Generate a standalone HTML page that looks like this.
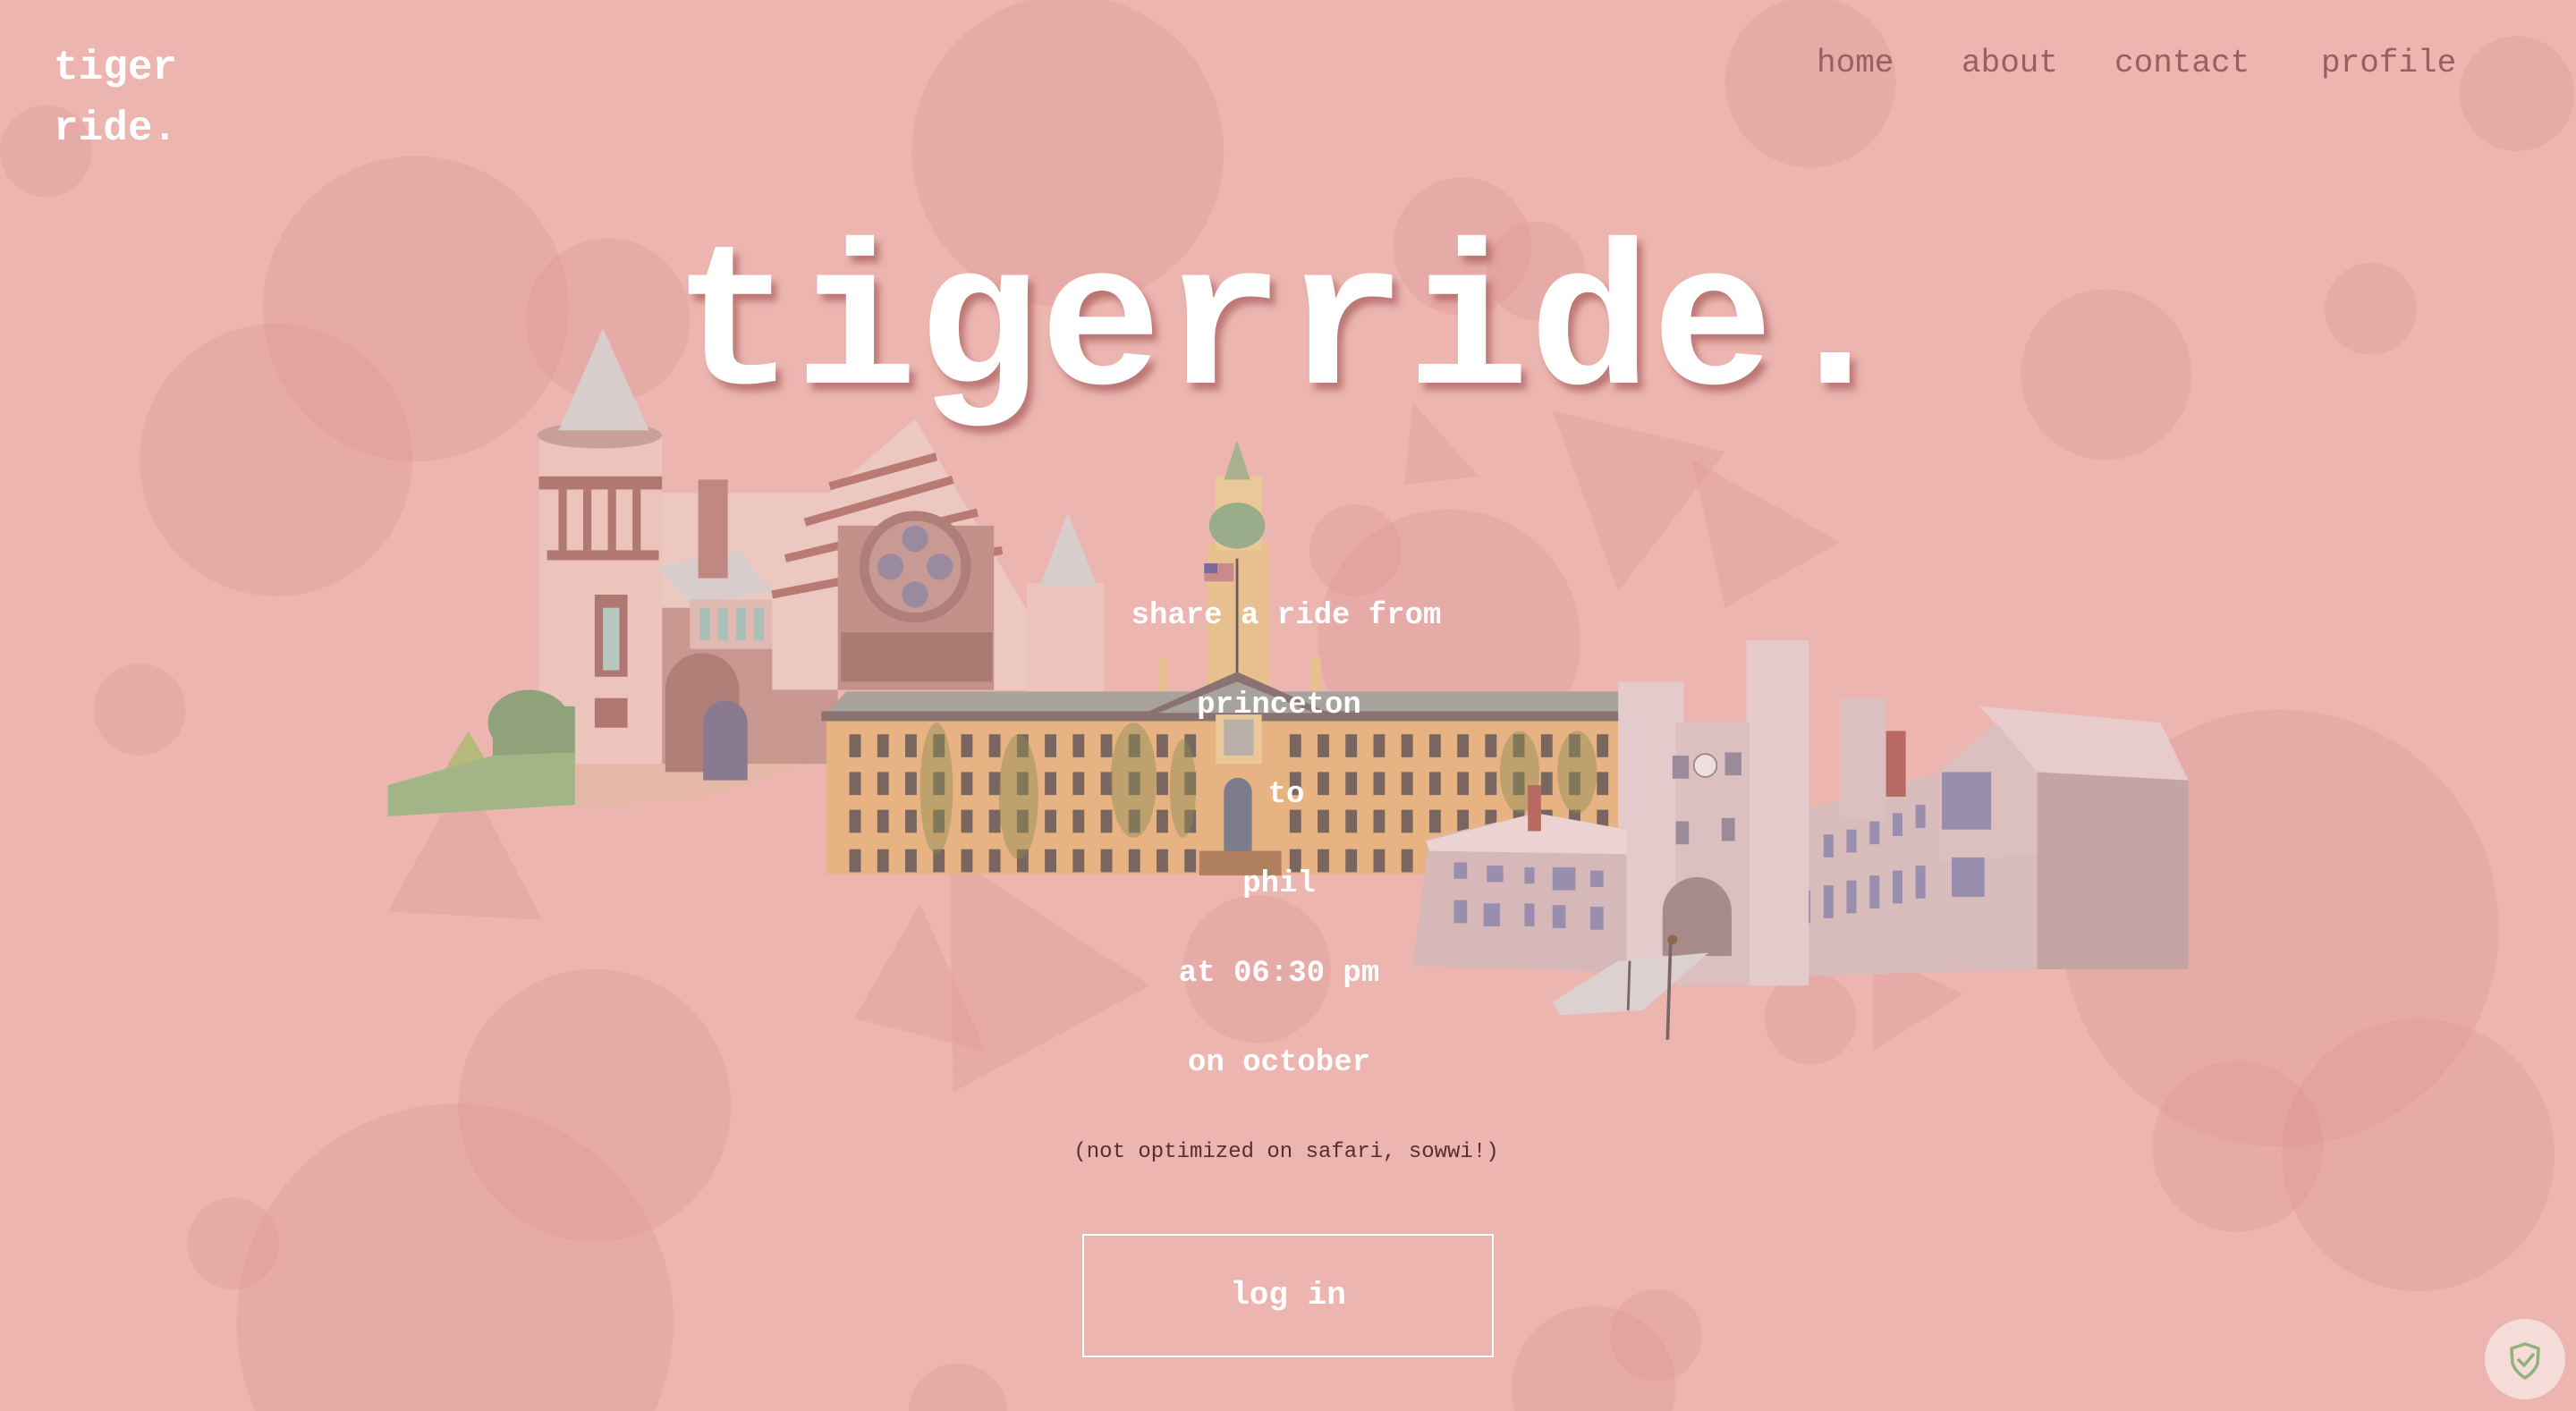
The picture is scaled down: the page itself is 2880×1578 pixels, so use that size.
<!DOCTYPE html>
<html><head><meta charset="utf-8"><style>
html,body{margin:0;padding:0;width:2880px;height:1578px;overflow:hidden;background:#ecb5b0;font-family:"Liberation Mono","DejaVu Sans Mono",monospace;}
#wrap{position:relative;width:2880px;height:1578px;overflow:hidden;}
svg.bg{position:absolute;left:0;top:0;width:2880px;height:1578px;}
.logo{position:absolute;left:60px;top:42px;color:#fff;font-weight:bold;font-size:46px;line-height:68px;}
.nav{position:absolute;top:50px;font-size:36px;color:#9a5e5c;}
.title{position:absolute;left:0;width:2880px;top:218px;text-align:center;color:#fff;font-weight:bold;font-size:228px;line-height:300px;text-shadow:6px 8px 8px rgba(150,70,70,0.55);margin-left:-4px;}
.line{position:absolute;left:0;width:2860px;text-align:center;color:#fff;font-weight:bold;font-size:34px;}
.note{position:absolute;left:0;width:2876px;text-align:center;color:#5a2e2e;font-size:24px;top:1275px;}
.btn{position:absolute;left:1210px;top:1380px;width:456px;height:134px;border:2px solid #fff;color:#fff;font-weight:bold;font-size:36px;line-height:134px;text-align:center;}
.shield{position:absolute;left:2778px;top:1475px;width:90px;height:90px;border-radius:50%;background:#f5dcd9;}
</style></head><body><div id="wrap">
<svg class="bg" viewBox="0 0 1568 859" preserveAspectRatio="none">
<g fill="rgba(215,135,135,0.22)">
<circle cx="650" cy="92" r="95"/><circle cx="1102" cy="50" r="52"/><circle cx="1532" cy="57" r="35"/><circle cx="28" cy="92" r="28"/>
<circle cx="253" cy="188" r="93"/><circle cx="370" cy="195" r="50"/><circle cx="168" cy="280" r="83"/><circle cx="890" cy="150" r="42"/>
<circle cx="935" cy="165" r="30"/><circle cx="1282" cy="228" r="52"/><circle cx="1443" cy="188" r="28"/><circle cx="85" cy="432" r="28"/>
<circle cx="882" cy="390" r="80"/><circle cx="825" cy="335" r="28"/><circle cx="1388" cy="565" r="133"/><circle cx="362" cy="673" r="83"/>
<circle cx="1362" cy="698" r="52"/><circle cx="1472" cy="703" r="83"/><circle cx="277" cy="805" r="133"/><circle cx="142" cy="757" r="28"/>
<circle cx="765" cy="590" r="45"/><circle cx="1102" cy="620" r="28"/><circle cx="1008" cy="813" r="28"/><circle cx="970" cy="845" r="50"/><circle cx="583" cy="860" r="30"/>
<polygon points="236,555 283,470 330,560"/><polygon points="945,250 1050,275 985,360"/><polygon points="1030,280 1120,330 1050,370"/>
<polygon points="520,620 560,550 600,640"/><polygon points="578,520 700,600 580,665"/><polygon points="1140,580 1195,605 1140,640"/>
<polygon points="860,245 900,290 855,295"/>
</g>
<polygon points="350,455 500,462 430,485 350,492" fill="#e6b8a8"/>
<rect x="330" y="300" width="180" height="165" fill="#ecc8c0"/>
<rect x="400" y="370" width="110" height="95" fill="#c89890"/>
<path d="M405,470 V420 A22,22 0 0 1 450,420 V470Z" fill="#b08078"/>
<path d="M428,475 V440 A13,13 0 0 1 455,440 V475Z" fill="#8a7a90"/>
<rect x="328" y="265" width="75" height="200" fill="#ecc4bc"/>
<rect x="328" y="290" width="75" height="8" fill="#b07870"/>
<rect x="333" y="335" width="68" height="6" fill="#b07870"/>
<g fill="#b07870"><rect x="340" y="298" width="5" height="37"/><rect x="355" y="298" width="5" height="37"/><rect x="370" y="298" width="5" height="37"/><rect x="385" y="298" width="5" height="37"/></g>
<ellipse cx="365" cy="265" rx="38" ry="8" fill="#c8a098"/>
<polygon points="340,262 367,200 395,262" fill="#d8cccc"/>
<rect x="362" y="362" width="20" height="50" fill="#b07870"/><rect x="367" y="370" width="10" height="38" fill="#b8c8c0"/>
<rect x="362" y="425" width="20" height="18" fill="#b07870"/>
<polygon points="400,345 450,335 470,360 420,368" fill="#d8cccc"/>
<rect x="420" y="365" width="50" height="30" fill="#e0bab2"/><g fill="#a8c0b8"><rect x="426" y="370" width="6" height="20"/><rect x="437" y="370" width="6" height="20"/><rect x="448" y="370" width="6" height="20"/><rect x="459" y="370" width="6" height="20"/></g>
<rect x="425" y="292" width="18" height="60" fill="#c08880"/>
<polygon points="470,420 470,330 557,255 630,380 630,420" fill="#ecc8c0"/>
<g stroke="#b87a72" stroke-width="5"><line x1="490" y1="318" x2="580" y2="292"/><line x1="478" y1="340" x2="595" y2="312"/><line x1="470" y1="362" x2="610" y2="335"/><line x1="505" y1="296" x2="570" y2="278"/></g>
<rect x="510" y="320" width="95" height="100" fill="#c4908a"/>
<circle cx="557" cy="345" r="34" fill="#b07e78"/><circle cx="557" cy="345" r="28" fill="#c89a94"/>
<g fill="#9a8aa0"><circle cx="557" cy="328" r="8"/><circle cx="572" cy="345" r="8"/><circle cx="557" cy="362" r="8"/><circle cx="542" cy="345" r="8"/></g>
<rect x="512" y="385" width="92" height="30" fill="#a87a72"/>
<rect x="625" y="355" width="47" height="70" fill="#ecc4bc"/><polygon points="633,357 650,312 668,357" fill="#d8cccc"/>
<rect x="300" y="430" width="50" height="35" fill="#8fa27c"/><ellipse cx="322" cy="440" rx="25" ry="20" fill="#8fa27c"/>
<polygon points="270,470 285,445 300,470" fill="#b8b87a"/>
<polygon points="236,478 300,460 350,458 350,490 236,497" fill="#a3b487"/>
<rect x="735" y="330" width="38" height="95" fill="#e8c090"/><rect x="740" y="290" width="28" height="45" fill="#eac898"/>
<ellipse cx="753" cy="320" rx="17" ry="14" fill="#9aad8a"/><polygon points="745,292 753,268 761,292" fill="#a8b090"/>
<rect x="705" y="400" width="6" height="25" fill="#e8c090"/><rect x="798" y="400" width="6" height="25" fill="#e8c090"/>
<line x1="753" y1="340" x2="753" y2="410" stroke="#6a5a5a" stroke-width="1.5"/><rect x="733" y="343" width="18" height="11" fill="#c88a8a"/><rect x="733" y="343" width="8" height="6" fill="#7a6a9a"/>
<rect x="503" y="437" width="490" height="95" fill="#e8b383"/>
<polygon points="500,438 515,421 985,421 993,438" fill="#a8a29c"/>
<rect x="500" y="433" width="493" height="6" fill="#8a7272"/>
<polygon points="688,438 753,409 818,438" fill="#8a7272"/><polygon points="705,434 753,415 800,434" fill="#a8a29c"/>
<g fill="#7a6660" id="rows">
<rect x="517" y="447" width="7" height="14"/><rect x="534" y="447" width="7" height="14"/><rect x="551" y="447" width="7" height="14"/><rect x="568" y="447" width="7" height="14"/><rect x="585" y="447" width="7" height="14"/><rect x="602" y="447" width="7" height="14"/><rect x="619" y="447" width="7" height="14"/><rect x="636" y="447" width="7" height="14"/><rect x="653" y="447" width="7" height="14"/><rect x="670" y="447" width="7" height="14"/><rect x="687" y="447" width="7" height="14"/><rect x="704" y="447" width="7" height="14"/><rect x="721" y="447" width="7" height="14"/>
<rect x="785" y="447" width="7" height="14"/><rect x="802" y="447" width="7" height="14"/><rect x="819" y="447" width="7" height="14"/><rect x="836" y="447" width="7" height="14"/><rect x="853" y="447" width="7" height="14"/><rect x="870" y="447" width="7" height="14"/><rect x="887" y="447" width="7" height="14"/><rect x="904" y="447" width="7" height="14"/><rect x="921" y="447" width="7" height="14"/><rect x="938" y="447" width="7" height="14"/><rect x="955" y="447" width="7" height="14"/><rect x="972" y="447" width="7" height="14"/>
</g>
<use href="#rows" y="23"/><use href="#rows" y="46"/><use href="#rows" y="70"/>
<rect x="740" y="435" width="28" height="30" fill="#eac898"/><rect x="745" y="438" width="18" height="22" fill="#b8b0a8"/>
<path d="M745,520 V482 A8.5,8.5 0 0 1 762,482 V520Z" fill="#7c7c8c"/>
<rect x="730" y="518" width="50" height="15" fill="#b08060"/>
<g fill="rgba(140,140,80,0.45)"><ellipse cx="570" cy="480" rx="10" ry="40"/><ellipse cx="620" cy="485" rx="12" ry="38"/><ellipse cx="690" cy="475" rx="14" ry="35"/><ellipse cx="720" cy="480" rx="8" ry="30"/><ellipse cx="925" cy="470" rx="12" ry="25"/><ellipse cx="960" cy="470" rx="12" ry="25"/></g>
<polygon points="1070,500 1240,455 1240,590 1070,595" fill="#d8bcbc"/>
<polygon points="1240,470 1332,475 1332,590 1240,590" fill="#c4a4a4"/>
<polygon points="1205,430 1315,440 1332,475 1240,470" fill="#e8cccc"/>
<polygon points="1180,470 1215,440 1240,470 1240,520 1180,525" fill="#dcc0c0"/>
<rect x="1182" y="470" width="30" height="35" fill="#9a8eae"/>
<g fill="#9a8eae"><rect x="1082" y="545" width="6" height="20"/><rect x="1096" y="542" width="6" height="20"/><rect x="1110" y="539" width="6" height="20"/><rect x="1124" y="536" width="6" height="20"/><rect x="1138" y="533" width="6" height="20"/><rect x="1152" y="530" width="6" height="20"/><rect x="1166" y="527" width="6" height="20"/><rect x="1188" y="522" width="20" height="24"/>
<rect x="1110" y="508" width="6" height="14"/><rect x="1124" y="505" width="6" height="14"/><rect x="1138" y="500" width="6" height="14"/><rect x="1152" y="495" width="6" height="14"/><rect x="1166" y="490" width="6" height="14"/></g>
<rect x="1138" y="445" width="22" height="40" fill="#b86a62"/>
<rect x="1120" y="425" width="28" height="75" fill="#dcc0c0"/>
<rect x="985" y="415" width="40" height="180" fill="#e4caca"/><rect x="1063" y="390" width="38" height="210" fill="#e4caca"/>
<rect x="1020" y="440" width="45" height="160" fill="#dcc0c0"/>
<path d="M1012,582 V555 A18,18 0 0 1 1054,555 V582Z" fill="#a88c8c"/>
<circle cx="1038" cy="466" r="7" fill="#f0dede" stroke="#9a8888"/>
<g fill="#9a8a9a"><rect x="1018" y="460" width="10" height="14"/><rect x="1050" y="458" width="10" height="14"/><rect x="1020" y="500" width="8" height="14"/><rect x="1048" y="498" width="8" height="14"/></g>
<polygon points="860,588 870,510 935,495 990,505 990,592" fill="#d6b8b8"/>
<polygon points="868,512 935,495 990,505 990,520 870,518" fill="#ecd2d0"/>
<rect x="930" y="478" width="8" height="28" fill="#b86a62"/>
<g fill="#9a8eae"><rect x="885" y="525" width="8" height="10"/><rect x="905" y="527" width="10" height="10"/><rect x="928" y="528" width="6" height="10"/><rect x="945" y="528" width="14" height="14"/><rect x="968" y="530" width="8" height="10"/>
<rect x="885" y="548" width="8" height="14"/><rect x="903" y="550" width="10" height="14"/><rect x="928" y="550" width="6" height="14"/><rect x="945" y="551" width="8" height="14"/><rect x="968" y="552" width="8" height="14"/></g>
<polygon points="945,610 985,585 1040,580 1000,615 950,618" fill="#ddd0d0"/>
<line x1="1017" y1="570" x2="1015" y2="633" stroke="#7a6666" stroke-width="2"/><circle cx="1018" cy="572" r="3" fill="#8a6a50"/>
<line x1="992" y1="585" x2="991" y2="615" stroke="#7a6666" stroke-width="1.5"/>
</svg>
<div class="logo">tiger<br>ride.</div>
<div class="nav" style="left:2031px">home</div>
<div class="nav" style="left:2193px">about</div>
<div class="nav" style="left:2364px">contact</div>
<div class="nav" style="left:2595px">profile</div>
<div class="title">tigerride.</div>
<div class="line" style="top:670px;width:2876px">share a ride from</div>
<div class="line" style="top:770px">princeton</div>
<div class="line" style="top:870px;width:2876px;margin-left:0">to</div>
<div class="line" style="top:970px">phil</div>
<div class="line" style="top:1070px">at 06:30 pm</div>
<div class="line" style="top:1170px">on october</div>
<div class="note">(not optimized on safari, sowwi!)</div>
<div class="btn">log in</div>
<div class="shield"><svg width="90" height="90" viewBox="0 0 90 90"><path d="M45,28 L60,33 L59,50 Q55,60 45,66 Q35,60 31,50 L30,33 Z" fill="none" stroke="#8fb27a" stroke-width="3.5" stroke-linejoin="round"/><path d="M38,46 L44,52 L54,40" fill="none" stroke="#8fb27a" stroke-width="3.5" stroke-linecap="round" stroke-linejoin="round"/></svg></div>
</div></body></html>
